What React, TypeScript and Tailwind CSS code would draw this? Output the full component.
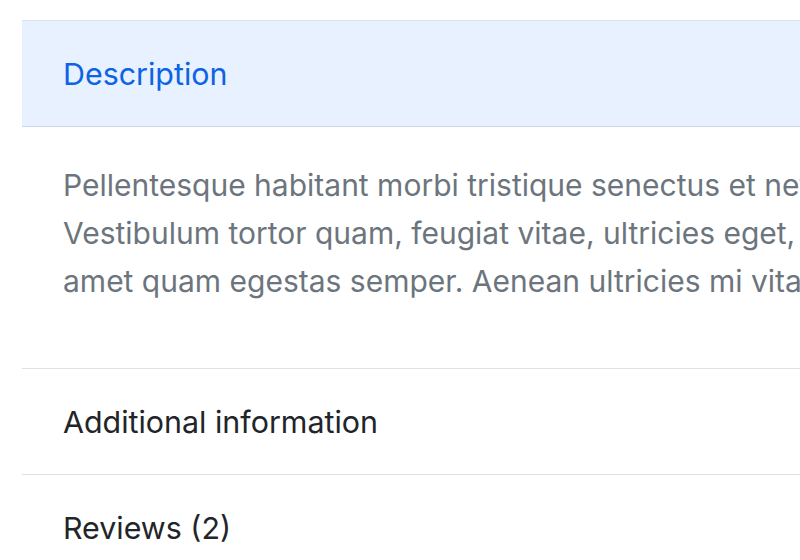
import React from "react";

const items = [
  { title: "Description", open: true },
  { title: "Additional information", open: false },
  { title: "Reviews (2)", open: false },
];

export default function App() {
  return (
    <div className="h-[560px] w-[800px] overflow-hidden bg-white pt-[20px] pl-[22px] font-['Inter','Liberation_Sans',sans-serif]">
      <div className="w-[1200px] border-t border-[#dee2e6]">
        {items.map((item) =>
          item.open ? (
            <div key={item.title} className="border-b border-[#dee2e6]">
              <div className="flex h-[106px] items-center bg-[#e7f1ff] pt-[2px] pl-[41px] text-[30.4px] text-[#0c63e4] shadow-[inset_0_-1px_0_#ccd6e4]">
                {item.title}
              </div>
              <div className="pt-[34px] pb-[63px] pl-[41px]">
                <p className="whitespace-nowrap text-[30px] leading-[48px] text-[#6c757d]">
                  Pellentesque habitant morbi tristique senectus et netus et malesuada fames ac turpis egestas.
                  <br />
                  Vestibulum tortor quam, feugiat vitae, ultricies eget, tempor sit amet, ante. Donec eu libero sit
                  <br />
                  amet quam egestas semper. Aenean ultricies mi vitae est. Mauris placerat eleifend leo.
                </p>
              </div>
            </div>
          ) : (
            <div
              key={item.title}
              className="flex h-[106px] items-center border-b border-[#dee2e6] pt-[3px] pl-[41px] text-[30.4px] text-[#212529]"
            >
              {item.title}
            </div>
          )
        )}
      </div>
    </div>
  );
}
